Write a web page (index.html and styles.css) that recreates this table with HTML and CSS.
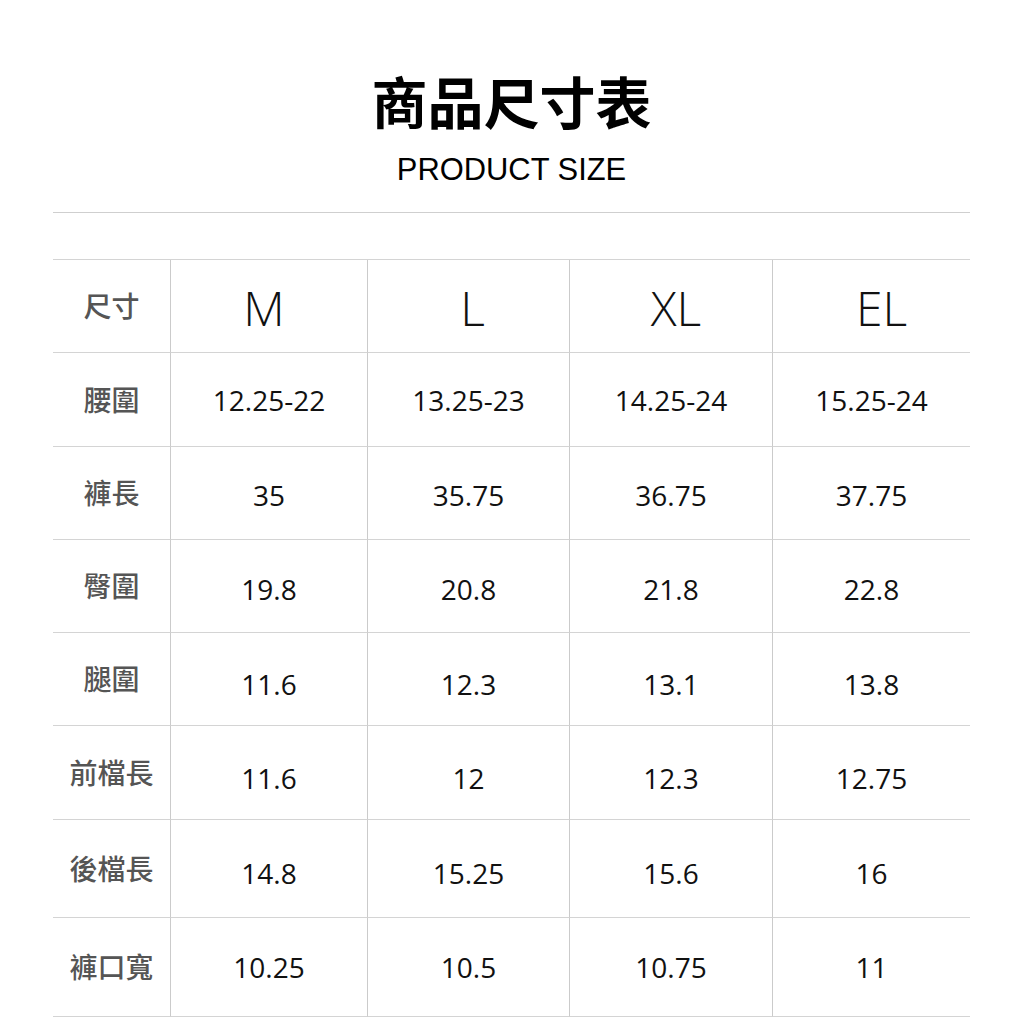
FILE: index.html
```html
<!DOCTYPE html>
<html lang="zh-Hant">
<head>
<meta charset="utf-8">
<title>商品尺寸表</title>
<link rel="stylesheet" href="styles.css">
</head>
<body>
<main class="page">
  <header class="heading">
    <h1 class="title">商品尺寸表</h1>
    <p class="subtitle">PRODUCT SIZE</p>
  </header>
  <div class="rule"></div>
  <div class="size-table">
    <div class="cell label">尺寸</div>
    <div class="cell size size-m">M</div>
    <div class="cell size size-l">L</div>
    <div class="cell size size-xl">XL</div>
    <div class="cell size size-el">EL</div>

    <div class="cell label">腰圍</div>
    <div class="cell num r2">12.25-22</div>
    <div class="cell num r2">13.25-23</div>
    <div class="cell num r2">14.25-24</div>
    <div class="cell num r2">15.25-24</div>

    <div class="cell label">褲長</div>
    <div class="cell num r3">35</div>
    <div class="cell num r3">35.75</div>
    <div class="cell num r3">36.75</div>
    <div class="cell num r3">37.75</div>

    <div class="cell label">臀圍</div>
    <div class="cell num r4">19.8</div>
    <div class="cell num r4">20.8</div>
    <div class="cell num r4">21.8</div>
    <div class="cell num r4">22.8</div>

    <div class="cell label">腿圍</div>
    <div class="cell num r5">11.6</div>
    <div class="cell num r5">12.3</div>
    <div class="cell num r5">13.1</div>
    <div class="cell num r5">13.8</div>

    <div class="cell label">前檔長</div>
    <div class="cell num r6">11.6</div>
    <div class="cell num r6">12</div>
    <div class="cell num r6">12.3</div>
    <div class="cell num r6">12.75</div>

    <div class="cell label">後檔長</div>
    <div class="cell num r7">14.8</div>
    <div class="cell num r7">15.25</div>
    <div class="cell num r7">15.6</div>
    <div class="cell num r7">16</div>

    <div class="cell label">褲口寬</div>
    <div class="cell num r8">10.25</div>
    <div class="cell num r8">10.5</div>
    <div class="cell num r8">10.75</div>
    <div class="cell num r8">11</div>
  </div>
</main>
</body>
</html>
```

FILE: styles.css
```css
html, body {
  margin: 0;
  padding: 0;
  background: #ffffff;
}

body {
  font-family: "Open Sans", "Noto Sans CJK TC", sans-serif;
  color: #111111;
}

.page {
  width: 917px;
  margin: 0 0 0 53px;
}

.heading {
  display: flex;
  flex-direction: column;
  align-items: center;
  padding-top: 72px;
}

.title {
  margin: 0;
  font-family: "Noto Sans CJK TC", sans-serif;
  font-weight: 700;
  font-size: 56px;
  line-height: 56px;
  color: #000000;
}

.subtitle {
  margin: 26px 0 0;
  font-family: "Liberation Sans", Arial, sans-serif;
  font-size: 30.9px;
  line-height: 32px;
  color: #000000;
}

.rule {
  margin-top: 26px;
  height: 1px;
  background: #cfcfcf;
}

.size-table {
  margin-top: 46px;
  display: grid;
  grid-template-columns: 117px 197px 202px 203px 198px;
  grid-template-rows: 93px 94px 93px 93px 93px 94px 98px 99px;
  border-top: 1px solid #d4d4d4;
}

.cell {
  box-sizing: border-box;
  display: flex;
  align-items: center;
  justify-content: center;
  border-bottom: 1px solid #d4d4d4;
  border-left: 1px solid #cbcbcb;
}

.label {
  border-left: none;
  font-family: "Noto Sans CJK TC", sans-serif;
  font-weight: 500;
  font-size: 28px;
  color: #555555;
  padding-bottom: 2px;
}

.num {
  font-family: "Open Sans", sans-serif;
  font-size: 28px;
  color: #111111;
}

.r2 { padding-top: 0; }
.r3 { padding-top: 3px; }
.r4 { padding-top: 6px; }
.r5 { padding-top: 10px; }
.r6 { padding-top: 11px; }
.r7 { padding-top: 8px; }
.r8 { padding-top: 0; }

.size {
  font-family: "Open Sans", sans-serif;
  font-weight: 300;
  font-size: 48px;
  color: #111111;
  padding-top: 2px;
}

.size-m { padding-right: 10px; }
.size-l { padding-left: 8px; }
.size-xl { padding-left: 10px; }
.size-el { padding-left: 20px; }
```
